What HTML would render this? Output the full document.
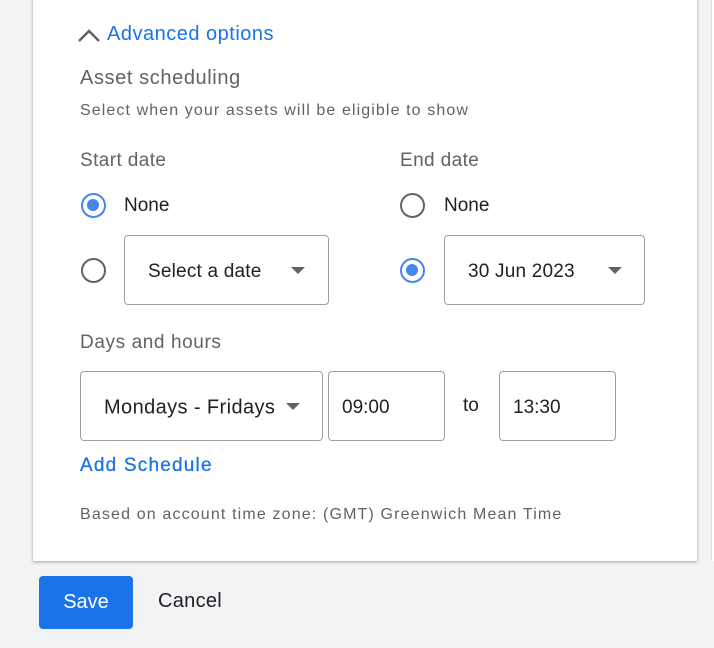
<!DOCTYPE html>
<html><head><style>
body{margin:0;width:714px;height:648px;background:#f1f3f4;font-family:"Liberation Sans",sans-serif;position:relative;overflow:hidden}
.card{position:absolute;left:33px;top:-10px;width:664px;height:571px;background:#fff;box-shadow:0 1px 3px rgba(0,0,0,.35)}
.strip{position:absolute;left:711px;top:0;width:3px;height:561px;background:#fff;border-left:1px solid #ddd}
.t{position:absolute;white-space:nowrap}
.radio{position:absolute;width:25px;height:25px;border:2.5px solid #5f6368;border-radius:50%;box-sizing:border-box}
.radio.on{border-color:#4285f4}
.radio.on::after{content:"";position:absolute;left:4px;top:4px;width:12px;height:12px;border-radius:50%;background:#4285f4}
.box{position:absolute;border:1px solid #9aa0a6;border-radius:4px;box-sizing:border-box;background:#fff;font-size:19px;color:#202124}
.box span{position:absolute;top:50%;transform:translateY(-50%);margin-top:2px}
.arr{position:absolute;width:0;height:0;border-left:7px solid transparent;border-right:7px solid transparent;border-top:7px solid #5f6368;top:50%;margin-top:-3px}
</style></head><body>
<div class="card"></div>
<div class="strip"></div>
<svg style="position:absolute;left:77px;top:27px" width="24" height="16"><path d="M2 14 L12 4 L22 14" stroke="#5f6368" stroke-width="2.5" fill="none"/></svg>
<div class="t" style="left:107px;top:23px;font-size:20px;letter-spacing:0.5px;color:#1a73e8">Advanced options</div>
<div class="t" style="left:80px;top:67px;font-size:20px;letter-spacing:0.6px;color:#5f6368">Asset scheduling</div>
<div class="t" style="left:80px;top:102px;font-size:16px;letter-spacing:1.1px;color:#5f6368">Select when your assets will be eligible to show</div>
<div class="t" style="left:80px;top:150px;font-size:19px;letter-spacing:0.4px;color:#5f6368">Start date</div>
<div class="t" style="left:400px;top:150px;font-size:19px;letter-spacing:0.4px;color:#5f6368">End date</div>
<div class="radio on" style="left:81px;top:193px"></div>
<div class="t" style="left:124px;top:195px;font-size:19px;color:#202124">None</div>
<div class="radio" style="left:81px;top:258px"></div>
<div class="box" style="left:124px;top:235px;width:205px;height:70px"><span style="left:23px;letter-spacing:0.2px">Select a date</span><div class="arr" style="left:166px"></div></div>
<div class="radio" style="left:400px;top:193px"></div>
<div class="t" style="left:444px;top:195px;font-size:19px;color:#202124">None</div>
<div class="radio on" style="left:400px;top:258px"></div>
<div class="box" style="left:444px;top:235px;width:201px;height:70px"><span style="left:23px;letter-spacing:0.2px">30 Jun 2023</span><div class="arr" style="left:163px"></div></div>
<div class="t" style="left:80px;top:332px;font-size:19px;letter-spacing:0.6px;color:#5f6368">Days and hours</div>
<div class="box" style="left:80px;top:371px;width:243px;height:70px"><span style="left:23px;font-size:20px;letter-spacing:0.4px">Mondays - Fridays</span><div class="arr" style="left:205px"></div></div>
<div class="box" style="left:328px;top:371px;width:117px;height:70px"><span style="left:13px">09:00</span></div>
<div class="t" style="left:463px;top:395px;font-size:19px;color:#202124">to</div>
<div class="box" style="left:499px;top:371px;width:117px;height:70px"><span style="left:13px">13:30</span></div>
<div class="t" style="left:80px;top:455px;font-size:19px;letter-spacing:1.2px;color:#1a73e8;-webkit-text-stroke:0.3px #1a73e8">Add Schedule</div>
<div class="t" style="left:80px;top:506px;font-size:16px;letter-spacing:1.15px;color:#5f6368">Based on account time zone: (GMT) Greenwich Mean Time</div>
<div style="position:absolute;left:39px;top:576px;width:94px;height:53px;background:#1a73e8;border-radius:4px;color:#fff;font-size:20px;text-align:center;line-height:53px">Save</div>
<div class="t" style="left:158px;top:590px;font-size:20px;letter-spacing:0.3px;color:#202124">Cancel</div>
</body></html>
